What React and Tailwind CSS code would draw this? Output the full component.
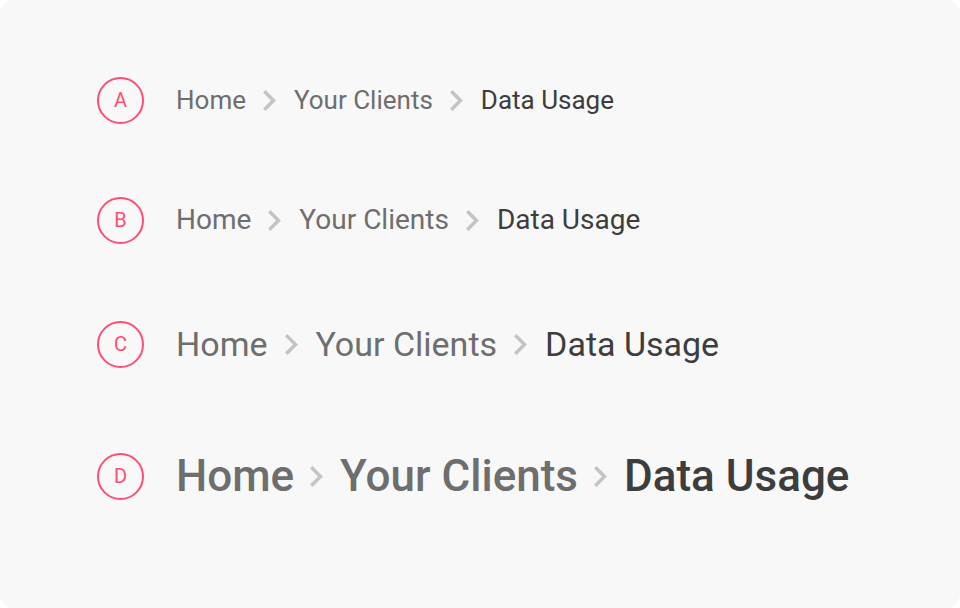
import React from 'react';

const rows = [
  { label: 'A', size: 'text-[26px]', weight: 'font-normal', gap: 'mx-[17px]', mt: 'mt-[76px]' },
  { label: 'B', size: 'text-[28px]', weight: 'font-normal', gap: 'mx-[17px]', mt: 'mt-[72px]' },
  { label: 'C', size: 'text-[34px]', weight: 'font-normal', gap: 'mx-[17px]', mt: 'mt-[76px]' },
  { label: 'D', size: 'text-[44px]', weight: 'font-medium', gap: 'mx-[16px]', mt: 'mt-[84px]' },
];

const crumbs = ['Home', 'Your Clients', 'Data Usage'];

function Chevron({ gap }) {
  return (
    <svg width="14" height="21" viewBox="0 0 14 21" className={`shrink-0 ${gap}`}>
      <path d="M2.5 0 L0 2.5 L8 10.5 L0 18.5 L2.5 21 L13 10.5 Z" fill="#c4c4c4" />
    </svg>
  );
}

function Breadcrumb({ size, weight, gap }) {
  return (
    <nav className={`flex items-center ${size} ${weight}`}>
      {crumbs.map((c, i) => (
        <React.Fragment key={c}>
          {i > 0 && <Chevron gap={gap} />}
          <span className={i === crumbs.length - 1 ? 'text-[#3d3d3d]' : 'text-[#6e6e6e]'}>{c}</span>
        </React.Fragment>
      ))}
    </nav>
  );
}

export default function App() {
  return (
    <div className="w-[960px] h-[608px] bg-white" style={{ fontFamily: 'Roboto, "Noto Sans", sans-serif' }}>
      <div className="w-full h-full bg-[#f8f8f8] rounded-[14px] pl-[97px] flex flex-col">
        {rows.map((r) => (
          <div key={r.label} className={`flex items-center h-[48px] ${r.mt}`}>
            <div className="w-[47px] h-[47px] rounded-full border-2 border-[#ff4d74] flex items-center justify-center text-[#ff4d74] text-[20px] font-normal leading-none shrink-0">
              {r.label}
            </div>
            <div className="ml-[32px]">
              <Breadcrumb size={r.size} weight={r.weight} gap={r.gap} />
            </div>
          </div>
        ))}
      </div>
    </div>
  );
}
